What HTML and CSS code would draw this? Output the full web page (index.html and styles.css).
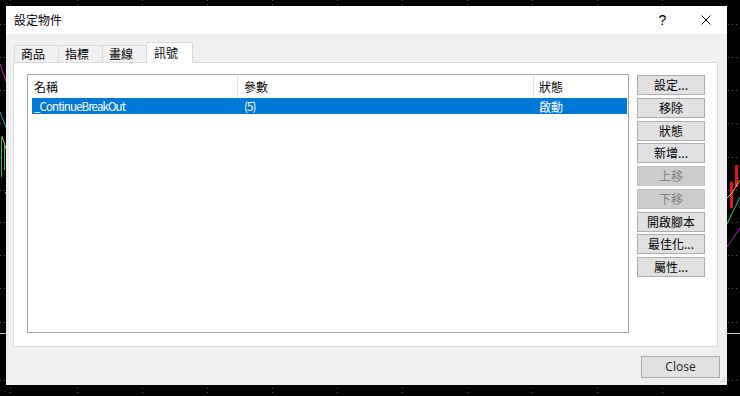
FILE: index.html
```html
<!DOCTYPE html>
<html lang="zh-Hant">
<head>
<meta charset="utf-8">
<title>設定物件</title>
<link rel="stylesheet" href="styles.css">
</head>
<body>
<svg class="chart" width="740" height="396" viewBox="0 0 740 396" aria-hidden="true">
  <g stroke="#5a5a5a" stroke-width="1" stroke-dasharray="1 3">
    <line x1="0" y1="24.5" x2="740" y2="24.5"/>
    <line x1="0" y1="57.5" x2="740" y2="57.5"/>
    <line x1="0" y1="90.5" x2="740" y2="90.5"/>
    <line x1="0" y1="123.5" x2="740" y2="123.5"/>
    <line x1="0" y1="157.5" x2="740" y2="157.5"/>
    <line x1="0" y1="190.5" x2="740" y2="190.5"/>
    <line x1="0" y1="222.5" x2="740" y2="222.5"/>
    <line x1="0" y1="255.5" x2="740" y2="255.5"/>
    <line x1="0" y1="288.5" x2="740" y2="288.5"/>
    <line x1="0" y1="322.5" x2="740" y2="322.5"/>
    <line x1="0" y1="380.5" x2="740" y2="380.5"/>
    <line x1="10.5" y1="0" x2="10.5" y2="396"/>
    <line x1="77.5" y1="0" x2="77.5" y2="396"/>
    <line x1="142.5" y1="0" x2="142.5" y2="396"/>
    <line x1="207.5" y1="0" x2="207.5" y2="396"/>
    <line x1="272.5" y1="0" x2="272.5" y2="396"/>
    <line x1="337.5" y1="0" x2="337.5" y2="396"/>
    <line x1="402.5" y1="0" x2="402.5" y2="396"/>
    <line x1="467.5" y1="0" x2="467.5" y2="396"/>
    <line x1="532.5" y1="0" x2="532.5" y2="396"/>
    <line x1="597.5" y1="0" x2="597.5" y2="396"/>
    <line x1="662.5" y1="0" x2="662.5" y2="396"/>
  </g>
  <line x1="0" y1="333.5" x2="740" y2="333.5" stroke="#c8c8c8" stroke-width="1"/>
  <polyline points="0,64 7,84" fill="none" stroke="#c020c0" stroke-width="1"/>
  <polyline points="0,112 7,130" fill="none" stroke="#20b0b0" stroke-width="1"/>
  <polyline points="2,136 7,152" fill="none" stroke="#d0c040" stroke-width="1"/>
  <line x1="1.5" y1="137" x2="1.5" y2="177" stroke="#30c060" stroke-width="1"/>
  <line x1="4.5" y1="145" x2="4.5" y2="170" stroke="#30c060" stroke-width="1"/>
  <rect x="5" y="192" width="1.5" height="1.5" fill="#30c060"/>
  <rect x="730" y="182" width="3" height="26" fill="#e01818"/>
  <rect x="735" y="165" width="3" height="22" fill="#e01818"/>
  <polyline points="727,198 732,193 740,180" fill="none" stroke="#e0c030" stroke-width="1"/>
  <polyline points="727,224 740,197" fill="none" stroke="#20c0b0" stroke-width="1"/>
  <polyline points="727,247 740,228" fill="none" stroke="#b020c0" stroke-width="1"/>
</svg>

<div class="dialog">
  <div class="titlebar">
    <span class="title">設定物件</span>
    <span class="tb-btn tb-help">?</span>
    <span class="tb-btn">
      <svg width="10" height="10" viewBox="0 0 10 10"><path d="M0.5 0.5 L9.5 9.5 M9.5 0.5 L0.5 9.5" stroke="#000" stroke-width="1" fill="none"/></svg>
    </span>
  </div>
  <div class="content">
    <div class="tabs">
      <div class="tab">商品</div>
      <div class="tab">指標</div>
      <div class="tab">畫線</div>
      <div class="tab tab-active">訊號</div>
    </div>
    <div class="panel">
      <div class="list">
        <div class="list-head">
          <div class="cell c1">名稱</div>
          <div class="cell c2 sep">參數</div>
          <div class="cell c3 sep">狀態</div>
        </div>
        <div class="list-row selected">
          <div class="cell c1 latin">_ContinueBreakOut</div>
          <div class="cell c2 latin">(5)</div>
          <div class="cell c3">啟動</div>
        </div>
      </div>
      <div class="side">
        <div class="btn">設定...</div>
        <div class="btn">移除</div>
        <div class="btn">狀態</div>
        <div class="btn">新增...</div>
        <div class="btn disabled">上移</div>
        <div class="btn disabled">下移</div>
        <div class="btn">開啟腳本</div>
        <div class="btn">最佳化...</div>
        <div class="btn">屬性...</div>
      </div>
    </div>
    <div class="footer">
      <div class="btn close-btn">Close</div>
    </div>
  </div>
  <svg class="grip" width="7" height="7" viewBox="0 0 7 7" aria-hidden="true">
    <g fill="#bdbdbd">
      <rect x="5" y="0" width="1" height="1"/>
      <rect x="3" y="2" width="1" height="1"/><rect x="5" y="2" width="1" height="1"/>
      <rect x="1" y="4" width="1" height="1"/><rect x="3" y="4" width="1" height="1"/><rect x="5" y="4" width="1" height="1"/>
    </g>
  </svg>
</div>
</body>
</html>
```

FILE: styles.css
```css
html, body {
  margin: 0;
  padding: 0;
}
body {
  width: 740px;
  height: 396px;
  background: #000;
  position: relative;
  overflow: hidden;
  font-family: "Noto Sans CJK TC", "Noto Sans", sans-serif;
  font-size: 12px;
  color: #000;
  padding: 6px 0 0 6px;
  box-sizing: border-box;
}
.chart {
  position: absolute;
  left: 0;
  top: 0;
}
.dialog {
  position: relative;
  width: 721px;
  height: 379px;
  display: flex;
  flex-direction: column;
  background: #f0f0f0;
}
.titlebar {
  height: 28px;
  background: #fff;
  display: flex;
  align-items: center;
  padding-left: 8px;
  flex: none;
}
.title {
  font-size: 12px;
  flex: 1;
  line-height: 28px;
}
.tb-btn {
  width: 43px;
  height: 28px;
  display: flex;
  align-items: center;
  justify-content: center;
  font-family: "Liberation Sans", sans-serif;
  font-size: 14px;
}
.content {
  flex: 1;
  padding: 8px 9px 7px 7px;
  display: flex;
  flex-direction: column;
}
.tabs {
  display: flex;
  align-items: flex-end;
  height: 20px;
  padding-left: 1px;
  position: relative;
  z-index: 1;
}
.tab {
  width: 45px;
  height: 17px;
  box-sizing: border-box;
  border: 1px solid #d9d9d9;
  border-bottom: none;
  margin-right: -1px;
  background: #f0f0f0;
  padding-left: 6px;
  line-height: 16px;
  font-size: 12px;
}
.tab-active {
  width: 47px;
  height: 21px;
  margin-bottom: -1px;
  background: #fff;
  padding-left: 7px;
  line-height: 19px;
}
.panel {
  height: 285px;
  box-sizing: border-box;
  border: 1px solid #d9d9d9;
  background: #fff;
  padding: 11px 12px 13px 13px;
  display: flex;
  gap: 8px;
}
.list {
  width: 602px;
  box-sizing: border-box;
  border: 1px solid #a3a3a3;
  padding: 0 1px 0 4px;
  background: #fff;
}
.list-head {
  display: flex;
  height: 23px;
  align-items: stretch;
}
.list-row {
  display: flex;
  height: 16px;
  align-items: center;
}
.list-head .cell {
  line-height: 23px;
}
.cell {
  box-sizing: border-box;
  white-space: nowrap;
  overflow: hidden;
}
.c1 { width: 205px; padding-left: 2px; }
.c2 { width: 296px; padding-left: 6px; }
.c3 { flex: 1; padding-left: 5px; }
.sep { border-left: 1px solid #e5e5e5; }
.list-row .c2 { padding-left: 7px; }
.list-row .c3 { padding-left: 6px; }
.selected {
  background: #0078d7;
  color: #fff;
}
.latin {
  font-family: "Noto Sans CJK TC", sans-serif;
  font-size: 11.5px;
  letter-spacing: -0.9px;
}
.side {
  display: flex;
  flex-direction: column;
  gap: 2.75px;
  padding-top: 1px;
}
.btn {
  width: 68px;
  height: 20px;
  box-sizing: border-box;
  border: 1px solid #adadad;
  background: #e1e1e1;
  display: flex;
  align-items: center;
  justify-content: center;
  font-size: 12px;
  line-height: 1;
}
.btn.disabled {
  background: #cccccc;
  border-color: #bfbfbf;
  color: #838383;
}
.footer {
  display: flex;
  justify-content: flex-end;
  margin-top: 9px;
  margin-right: -2px;
}
.close-btn {
  width: 79px;
  height: 22px;
  font-family: "Open Sans", "Noto Sans", sans-serif;
  font-size: 12px;
  color: #222;
}
.grip {
  position: absolute;
  right: 1px;
  bottom: 1px;
}
```
